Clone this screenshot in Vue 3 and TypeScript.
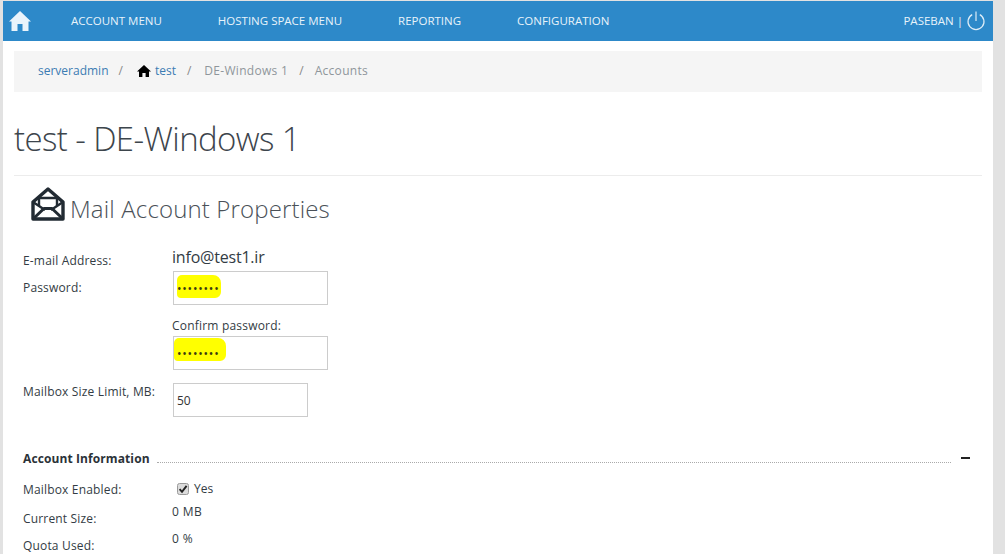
<script setup lang="ts">
const menu: string[] = ['ACCOUNT MENU', 'HOSTING SPACE MENU', 'REPORTING', 'CONFIGURATION']
</script>

<template>
  <div class="shell">
    <nav class="nav">
      <svg class="home" viewBox="0 0 22 20" width="22" height="20" aria-label="Home">
        <path fill="#eaf4fb" d="M11 0 L22 10.5 L19.5 10.5 L19.5 20 L13.5 20 L13.5 13 L8.5 13 L8.5 20 L2.5 20 L2.5 10.5 L0 10.5 Z" />
      </svg>
      <ul class="menu">
        <li v-for="m in menu" :key="m">{{ m }}</li>
      </ul>
      <div class="user">
        <span class="user-name">PASEBAN |</span>
        <svg viewBox="0 0 20 20" width="20" height="20" fill="none" stroke="#dcecf7" stroke-width="1.2">
          <path d="M6.2 3.6 A8 8 0 1 0 13.8 3.6" />
          <path d="M10 0.5 V10" />
        </svg>
      </div>
    </nav>

    <main class="main">
      <div class="crumbs">
        <a>serveradmin</a><i class="sep-first">/</i>
        <svg viewBox="0 0 14 12" width="14" height="12"><path fill="#000" d="M7 0 L14 6.4 L12 6.4 L12 12 L8.6 12 L8.6 8 L5.4 8 L5.4 12 L2 12 L2 6.4 L0 6.4 Z" /></svg>
        <a class="test">test</a><i class="sep-second">/</i>
        <span>DE-Windows 1</span><i>/</i>
        <span>Accounts</span>
      </div>

      <h1 class="title">test - DE-Windows 1</h1>

      <div class="section-head">
        <svg viewBox="0 0 34 34" width="34" height="34" fill="none" stroke="#222b33" stroke-width="3.4" stroke-linejoin="round">
          <path d="M2 15 L17 2 L32 15 V32 H2 Z" />
          <path d="M8 19 V11 H26 V19" stroke-width="2.4" />
          <path d="M2 15 L14 23 M32 15 L20 23" stroke-width="2.4" />
          <path d="M2 32 L13 21.5 H21 L32 32" stroke-width="3" />
        </svg>
        <h2>Mail Account Properties</h2>
      </div>

      <div class="form">
        <label class="lbl l-email">E-mail Address:</label>
        <div class="email">info@test1.ir</div>

        <label class="lbl l-pass">Password:</label>
        <div class="field">
          <span class="hl hl-a"></span>
          <input class="inp" type="password" value="password" readonly />
        </div>

        <div class="confirm-label">Confirm password:</div>
        <div class="field field-confirm">
          <span class="hl hl-b"></span>
          <input class="inp" type="password" value="password" readonly />
        </div>

        <label class="lbl l-size">Mailbox Size Limit, MB:</label>
        <input class="inp short" type="text" value="50" readonly />
      </div>

      <div class="group">
        <strong>Account Information</strong>
        <span class="dots"></span>
        <span class="minus"></span>
      </div>

      <div class="info">
        <span class="lbl">Mailbox Enabled:</span>
        <span class="yes">
          <svg viewBox="0 0 12 12" width="12" height="12">
            <rect x="0.5" y="0.5" width="11" height="11" rx="2" fill="#dcdcdc" stroke="#9a9a9a" />
            <path d="M2.6 6.2 L5 8.8 L9.6 2.8" fill="none" stroke="#222" stroke-width="1.9" />
          </svg>
          Yes
        </span>
        <span class="lbl">Current Size:</span>
        <span class="val">0 MB</span>
        <span class="lbl">Quota Used:</span>
        <span class="val">0 %</span>
      </div>
    </main>
  </div>
</template>

<style>
html, body { margin: 0; height: 100%; overflow: hidden; background: #e2e2e2; }
</style>

<style scoped>
.shell {
  width: 990px;
  height: 553px;
  margin: 1px 0 0 3px;
  background: #fff;
  overflow: hidden;
  font-family: "Open Sans", "Noto Sans", sans-serif;
  font-size: 12px;
  color: #333c44;
}
.nav {
  height: 40px;
  background: #2d89c9;
  display: flex;
  align-items: center;
  color: #e8f3fa;
}
.home { margin-left: 6px; }
.menu {
  list-style: none;
  margin: 0 0 2px 40px;
  padding: 0;
  display: flex;
  gap: 56px;
  font-size: 11.5px;
}
.user {
  margin-left: auto;
  margin-right: 7px;
  display: flex;
  align-items: center;
  gap: 3px;
  font-size: 11.5px;
}
.user-name { margin-bottom: 2px; }
.main { padding: 10px 11px 0; }
.crumbs {
  box-sizing: border-box;
  height: 41px;
  background: #f5f5f5;
  display: flex;
  align-items: center;
  padding: 0 0 2px 24px;
  color: #8f969b;
  font-size: 12px;
}
.crumbs a { color: #3b7cb3; }
.crumbs a.test { margin-left: 4px; }
.crumbs span { letter-spacing: 0.3px; }
.crumbs i { font-style: normal; margin: 0 11px; color: #888; }
.crumbs i.sep-first { margin: 0 14px 0 10px; }
.crumbs i.sep-second { margin: 0 13px 0 11px; }
.title {
  margin: 26px 0 0;
  font-size: 33px;
  line-height: 42px;
  font-weight: 300;
  color: #3d454c;
  letter-spacing: -0.6px;
  padding-bottom: 15px;
  border-bottom: 1px solid #ececec;
}
.section-head {
  display: flex;
  align-items: center;
  gap: 5px;
  margin: 11px 0 0 17px;
  height: 34px;
}
.section-head h2 {
  margin: 0;
  font-size: 24px;
  font-weight: 300;
  color: #4a5158;
  letter-spacing: 0.15px;
  position: relative;
  top: 4px;
}
.form {
  margin: 25px 0 0 9px;
  display: grid;
  grid-template-columns: 150px 1fr;
  align-items: start;
}
.lbl { font-size: 12px; line-height: 16px; color: #333c44; letter-spacing: 0.17px; }
.l-email { padding-top: 7px; }
.email {
  font-size: 16px;
  line-height: 22px;
  height: 25px;
  margin-left: -1px;
  color: #333c44;
  letter-spacing: -0.2px;
}
.l-pass { padding-top: 9px; }
.field { position: relative; width: 155px; height: 34px; }
.field-confirm { grid-column: 2; }
.confirm-label {
  grid-column: 2;
  font-size: 12px;
  line-height: 16px;
  margin: 13px 0 0 -1px;
  height: 18px;
  letter-spacing: 0.2px;
}
.inp {
  box-sizing: border-box;
  position: relative;
  width: 155px;
  height: 34px;
  border: 1px solid #ccc;
  background: transparent;
  padding: 0 3px;
  font: inherit;
  font-size: 12px;
  color: #333;
  outline: none;
  display: block;
}
.inp[type="password"] { font-size: 12px; letter-spacing: 0.8px; color: #3a3a10; }
.hl {
  position: absolute;
  background: #ffff00;
  border-radius: 5px 8px 6px 4px;
}
.hl-a { left: 4px; top: 4px; width: 44px; height: 23px; }
.hl-b { left: 1px; top: 2px; width: 52px; height: 23px; }
.l-size { margin-top: 14px; }
.short { width: 135px; margin-top: 13px; }
.group {
  margin: 32px 0 0 9px;
  display: flex;
  align-items: center;
  height: 18px;
}
.group strong { font-size: 12px; font-weight: 700; color: #2b3238; letter-spacing: 0.1px; }
.dots { flex: 1; margin-left: 7px; margin-top: 8px; border-bottom: 1px dotted #aaa; }
.minus { width: 9px; height: 2px; background: #222; margin: 0 12px 0 10px; }
.info {
  margin: 15px 0 0 9px;
  display: grid;
  grid-template-columns: 150px 1fr;
  grid-template-rows: 29px 27px 27px;
}
.yes { display: flex; align-items: flex-start; gap: 5px; padding-left: 4px; line-height: 14px; }
.yes svg { margin-top: 1px; }
.val { line-height: 16px; margin: -7px 0 0 -1px; letter-spacing: 0.4px; }
</style>
